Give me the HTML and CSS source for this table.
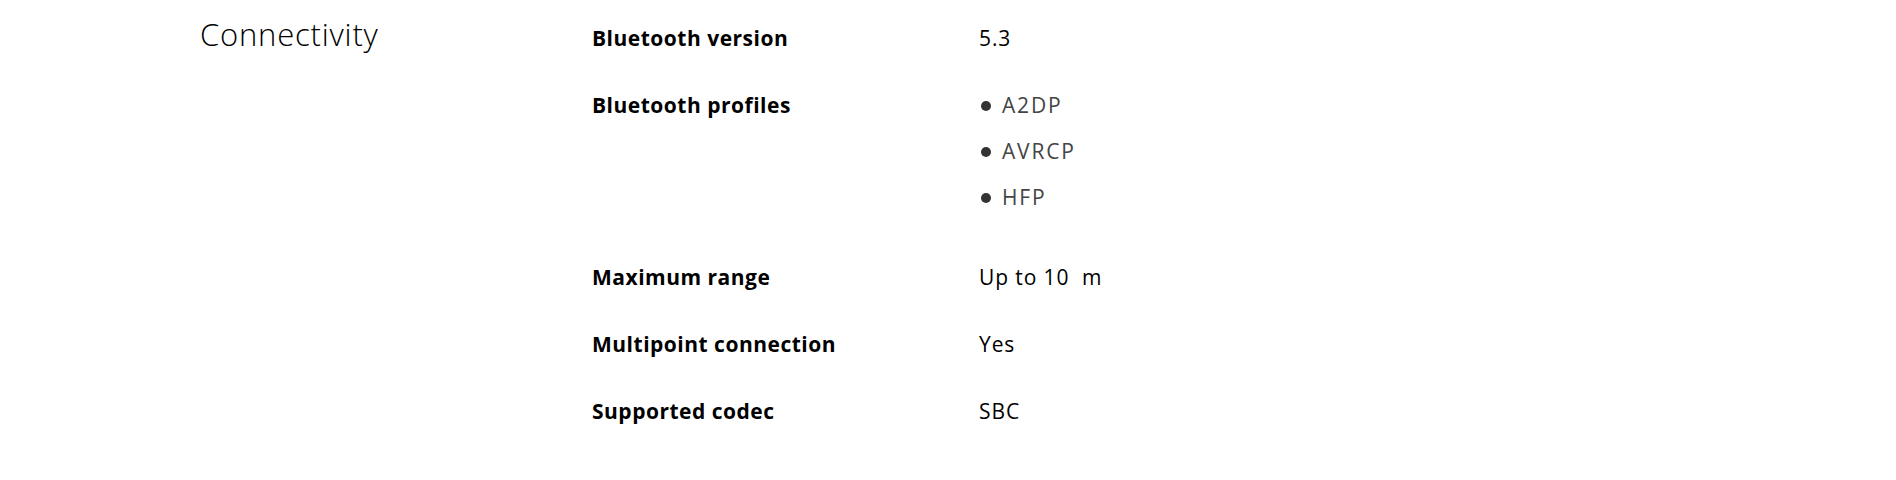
FILE: index.html
```html
<!DOCTYPE html>
<html lang="en">
<head>
<meta charset="utf-8">
<title>Connectivity</title>
<link rel="stylesheet" href="styles.css">
</head>
<body>
<section class="spec-group">
  <h2 class="group-title">Connectivity</h2>
  <dl class="spec-list">
    <div class="spec-row">
      <dt class="spec-label">Bluetooth version</dt>
      <dd class="spec-value">5.3</dd>
    </div>
    <div class="spec-row">
      <dt class="spec-label">Bluetooth profiles</dt>
      <dd class="spec-value">
        <ul class="bullets">
          <li>A2DP</li>
          <li>AVRCP</li>
          <li>HFP</li>
        </ul>
      </dd>
    </div>
    <div class="spec-row">
      <dt class="spec-label">Maximum range</dt>
      <dd class="spec-value">Up to 10&nbsp; m</dd>
    </div>
    <div class="spec-row">
      <dt class="spec-label">Multipoint connection</dt>
      <dd class="spec-value">Yes</dd>
    </div>
    <div class="spec-row">
      <dt class="spec-label">Supported codec</dt>
      <dd class="spec-value">SBC</dd>
    </div>
  </dl>
</section>
</body>
</html>
```

FILE: styles.css
```css
html, body {
  margin: 0;
  padding: 0;
  background: #ffffff;
}

body {
  font-family: "Open Sans", "Noto Sans", sans-serif;
  color: #000000;
  padding-top: 14px;
}

.spec-group {
  display: flex;
  align-items: baseline;
  padding-left: 200px;
}

.group-title {
  flex: 0 0 392px;
  margin: 0;
  font-size: 31px;
  font-weight: 300;
  line-height: 40px;
  letter-spacing: 0.8px;
  color: #000;
}

.spec-list {
  flex: 1;
  margin: 0;
  display: flex;
  flex-direction: column;
}

.spec-row {
  display: flex;
  align-items: baseline;
  padding-bottom: 36px;
}

.spec-label {
  flex: 0 0 387px;
  margin: 0;
  font-size: 21px;
  font-weight: 700;
  line-height: 31px;
  letter-spacing: 0.5px;
}

.spec-value {
  margin: 0;
  font-size: 21px;
  font-weight: 400;
  line-height: 31px;
  letter-spacing: 0.9px;
}

.bullets {
  list-style: none;
  margin: 0;
  padding: 0 0 13px;
  display: flex;
  flex-direction: column;
  gap: 15px;
}

.bullets li {
  color: #444;
  letter-spacing: 1.8px;
}

.bullets li::before {
  content: "";
  display: inline-block;
  width: 10px;
  height: 10px;
  margin: 0 11px 0 2px;
  border-radius: 50%;
  background: #333;
  vertical-align: 2px;
}
```
